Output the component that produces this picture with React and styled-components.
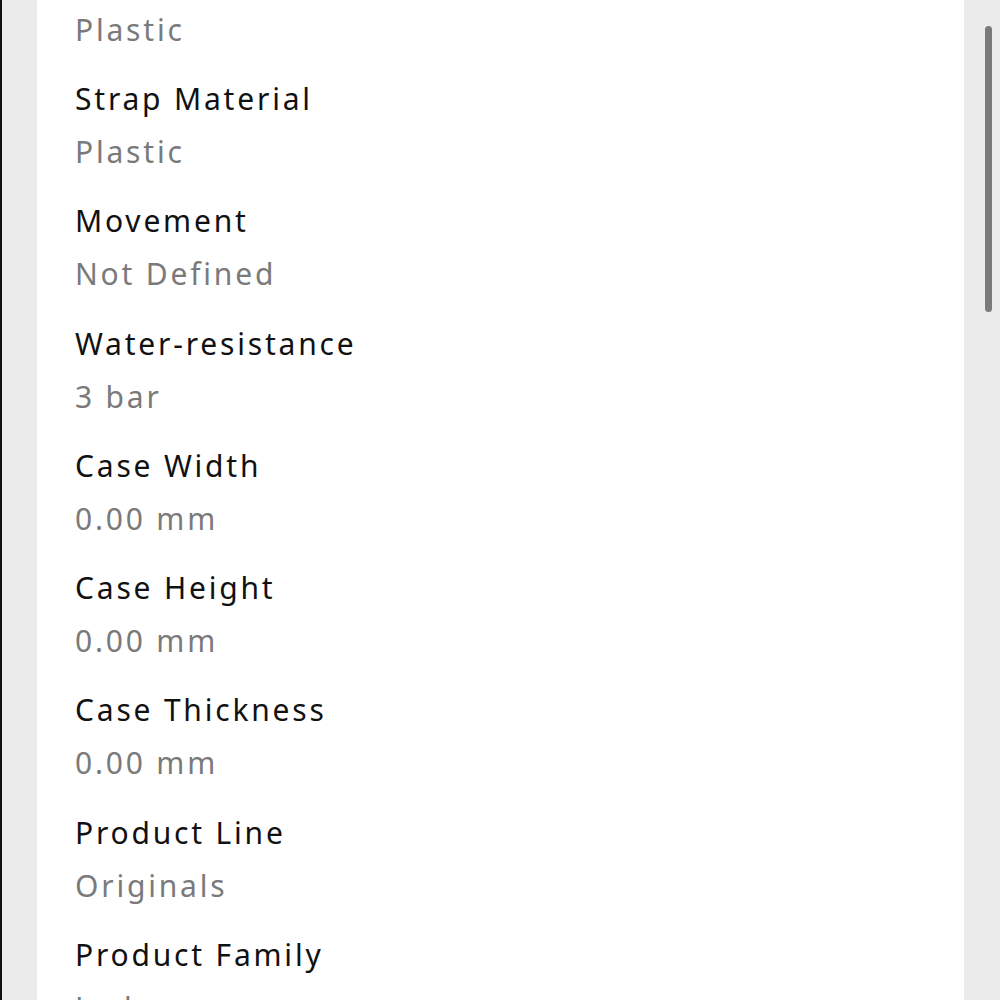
import React from "react";
import styled, { createGlobalStyle } from "styled-components";

const Global = createGlobalStyle`
  html, body { margin: 0; padding: 0; background: #ebebeb; }
  body { font-family: "Noto Sans", "Open Sans", sans-serif; -webkit-font-smoothing: antialiased; }
`;

const Page = styled.div`
  display: flex;
  height: 1000px;
  width: 1000px;
  overflow: hidden;
  background: #ebebeb;
`;

const LeftGutter = styled.div`
  width: 35px;
  flex: none;
  border-left: 2px solid #111;
  background: #ebebeb;
`;

const Panel = styled.main`
  flex: 1;
  background: #ffffff;
  padding: 0 38px;
  overflow: hidden;
`;

const List = styled.dl`
  margin: -41.3px 0 0;
  display: flex;
  flex-direction: column;
  gap: 33.3px;
`;

const Row = styled.div`
  display: flex;
  flex-direction: column;
  gap: 17px;
`;

const Label = styled.dt`
  font-size: 30px;
  line-height: 36px;
  color: #111;
  font-weight: 400;
  letter-spacing: 2.8px;
  white-space: nowrap;
`;

const Value = styled.dd`
  margin: 0;
  font-size: 30px;
  line-height: 36px;
  color: #7a7a7a;
  letter-spacing: 2.8px;
  white-space: nowrap;
`;

const ScrollTrack = styled.div`
  width: 36px;
  flex: none;
  background: #ebebeb;
  padding-top: 26px;
  box-sizing: border-box;
`;

const Thumb = styled.div`
  width: 7px;
  height: 286px;
  margin-left: 21px;
  border-radius: 4px;
  background: #7a7a7a;
`;

const specs = [
  ["Strap Colour", "Plastic"],
  ["Strap Material", "Plastic"],
  ["Movement", "Not Defined"],
  ["Water-resistance", "3 bar"],
  ["Case Width", "0.00 mm"],
  ["Case Height", "0.00 mm"],
  ["Case Thickness", "0.00 mm"],
  ["Product Line", "Originals"],
  ["Product Family", "Lady"],
];

export default function App() {
  return (
    <>
      <Global />
      <Page>
        <LeftGutter />
        <Panel>
          <List>
            {specs.map(([k, v]) => (
              <Row key={k}>
                <Label>{k}</Label>
                <Value>{v}</Value>
              </Row>
            ))}
          </List>
        </Panel>
        <ScrollTrack>
          <Thumb />
        </ScrollTrack>
      </Page>
    </>
  );
}
